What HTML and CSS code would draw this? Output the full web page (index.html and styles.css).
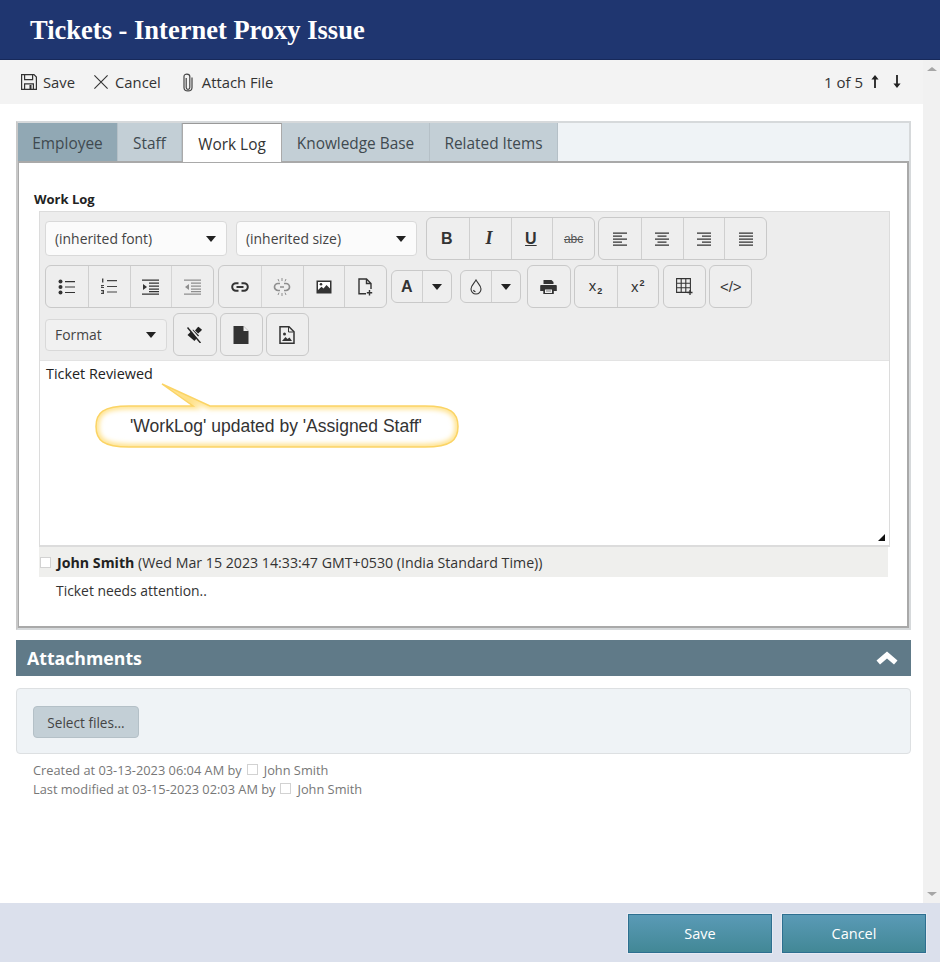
FILE: index.html
```html
<!DOCTYPE html>
<html>
<head lang="en">
    <meta charset="UTF-8">
    <title>Tickets - Internet Proxy Issue</title>
    <link rel="stylesheet" href="styles.css">
</head>
<body>
<div class="header"><h1>Tickets - Internet Proxy Issue</h1></div>
<div class="middle">
    <div class="content">
        <div class="actions">
            <a class="action act-save">
                <svg width="16" height="16" viewBox="0 0 16 16" fill="none" stroke="#333" stroke-width="1.2"><path d="M.6.6h12.400l2.400 2.400v12.400H.6z"/><path d="M3.600.6v5h8v-5M3.600 15.400V9.800h8.800v5.600"/><path d="M8.500 11h2v4.400h-2z" fill="#333" stroke="none"/></svg>
                <span>Save</span>
            </a>
            <a class="action act-cancel">
                <svg width="14" height="14" viewBox="0 0 14 14" fill="none" stroke="#333" stroke-width="1.1"><path d="M.4.4l13.200 13.200M13.600.4L.4 13.600"/></svg>
                <span>Cancel</span>
            </a>
            <a class="action act-attach">
                <svg width="10" height="19" viewBox="0 0 10 19" fill="none" stroke="#444" stroke-width="1.2"><path d="M3.200 5v9.500c0 2.500 3.600 2.500 3.600 0V3.500C6.800.2 1 .2 1 3.500v11c0 4.600 8 4.600 8 0V4.500"/></svg>
                <span>Attach File</span>
            </a>
            <div class="pager">
                <span>1 of 5</span>
                <svg class="pager-up" width="8" height="13" viewBox="0 0 8 13"><path d="M4 0L7.600 4.600H4.900V13H3.100V4.600H.4z" fill="#222"/></svg>
                <svg class="pager-down" width="8" height="13" viewBox="0 0 8 13"><path d="M4 13L.4 8.400h2.700V0h1.800v8.400h2.700z" fill="#222"/></svg>
            </div>
        </div>

        <div class="body">
            <div class="tabs">
                <ul class="tabstrip">
                    <li class="tab tab-employee">Employee</li>
                    <li class="tab tab-staff">Staff</li>
                    <li class="tab tab-active">Work Log</li>
                    <li class="tab tab-kb">Knowledge Base</li>
                    <li class="tab tab-related">Related Items</li>
                </ul>
                <div class="panel">
                    <label class="field-label">Work Log</label>
                    <div class="editor">
                        <div class="ed-toolbar">
                            <div class="ed-row">
                                <div class="combo combo-font"><span>(inherited font)</span><i class="caret"></i></div>
                                <div class="combo combo-size"><span>(inherited size)</span><i class="caret"></i></div>
                                <div class="group gl-9">
                                    <div class="btn"><b class="g-b">B</b></div>
                                    <div class="btn"><i class="g-i">I</i></div>
                                    <div class="btn"><u class="g-u">U</u></div>
                                    <div class="btn"><s class="g-s">abc</s></div>
                                </div>
                                <div class="group">
                                    <div class="btn"><svg width="16" height="16" viewBox="0 0 16 16" fill="#333"><path d="M1 1.500h14v1.300H1zM1 4.500h9v1.300H1zM1 7.500h14v1.300H1zM1 10.500h9v1.300H1zM1 13.500h14v1.300H1z"/></svg></div>
                                    <div class="btn"><svg width="16" height="16" viewBox="0 0 16 16" fill="#333"><path d="M1 1.500h14v1.300H1zM3.500 4.500h9v1.300h-9zM1 7.500h14v1.300H1zM3.500 10.500h9v1.300h-9zM1 13.500h14v1.300H1z"/></svg></div>
                                    <div class="btn"><svg width="16" height="16" viewBox="0 0 16 16" fill="#333"><path d="M1 1.500h14v1.300H1zM6 4.500h9v1.300H6zM1 7.500h14v1.300H1zM6 10.500h9v1.300H6zM1 13.500h14v1.300H1z"/></svg></div>
                                    <div class="btn"><svg width="16" height="16" viewBox="0 0 16 16" fill="#333"><path d="M1 1.500h14v1.300H1zM1 4.500h14v1.300H1zM1 7.500h14v1.300H1zM1 10.500h14v1.300H1zM1 13.500h14v1.300H1z"/></svg></div>
                                </div>
                            </div>
                            <div class="ed-row">
                                <div class="group">
                                    <div class="btn"><svg width="18" height="16" viewBox="0 0 18 16" fill="#333"><circle cx="2.500" cy="2.500" r="2"/><circle cx="2.500" cy="8" r="2"/><circle cx="2.500" cy="13.500" r="2"/><path d="M7 2h10v1.200H7zM7 7.400h10v1.200H7zM7 12.900h10v1.200H7z"/></svg></div>
                                    <div class="btn"><svg width="18" height="17" viewBox="0 0 18 17" fill="#444"><path d="M2 .5h1.400v4H2zM1 7h3v1H2.600v1H4v1H1V8.500h1.600v-.6H1zM1 12h3v4H1v-1h2v-.6H1.600v-.8H3V13H1z"/><path d="M7 2h10v1.200H7zM7 7.900h10v1.200H7zM7 13.400h10v1.200H7z"/></svg></div>
                                    <div class="btn"><svg width="17" height="16" viewBox="0 0 17 16" fill="#333"><path d="M0 .5h17v1.300H0zM7 3.500h10v1.200H7zM7 6.500h10v1.200H7zM7 9.500h10v1.200H7zM7 12h10v1.200H7zM0 14.500h17v1.200H0zM1 5l4 3-4 3z"/></svg></div>
                                    <div class="btn btn-off"><svg width="17" height="16" viewBox="0 0 17 16" fill="#777"><path d="M0 .5h17v1.300H0zM7 3.500h10v1.200H7zM7 6.500h10v1.200H7zM7 9.500h10v1.200H7zM7 12h10v1.200H7zM0 14.500h17v1.200H0zM5 5L1 8l4 3z"/></svg></div>
                                </div>
                                <div class="group gl-1">
                                    <div class="btn"><svg width="18" height="10" viewBox="0 0 18 10" fill="none" stroke="#333" stroke-width="2"><path d="M7.500 1.200H5a3.800 3.800 0 0 0 0 7.600h2.500M10.500 1.200H13a3.800 3.800 0 0 1 0 7.600h-2.500M5.500 5h7"/></svg></div>
                                    <div class="btn btn-off"><svg width="18" height="18" viewBox="0 0 18 18" fill="none" stroke="#777" stroke-width="1.700"><path d="M7 5.500H5a3.500 3.500 0 0 0 0 7h2M11 5.500h2a3.500 3.500 0 0 1 0 7h-2M7 9h4"/><path d="M9 0v3M5 1l1 2.400M13 1l-1 2.400M9 15v3M5 17l1-2.400M13 17l-1-2.400" stroke-width="1"/></svg></div>
                                    <div class="btn"><svg width="16" height="14" viewBox="0 0 16 14"><path d="M.5.5h15v13H.5z" fill="#333"/><path d="M2 2h12v6.500L10.500 5 7.500 8.500 5.500 6.800 2 10z" fill="#fff"/><circle cx="5" cy="4.200" r="1.300" fill="#333"/></svg></div>
                                    <div class="btn"><svg width="15" height="18" viewBox="0 0 15 18" fill="none" stroke="#333" stroke-width="1.400"><path d="M8 15.800H1V1h7.500L13 5.500v5.500M8.500 1v4.500H13"/><path d="M11.500 12v5.500M8.800 14.800h5.400"/></svg></div>
                                </div>
                                <div class="group group-small gl-1">
                                    <div class="btn btn-a"><span class="g-a">A</span></div>
                                    <div class="btn btn-drop"><i class="caret"></i></div>
                                </div>
                                <div class="group group-small gl-5">
                                    <div class="btn btn-a"><svg width="12" height="16" viewBox="0 0 12 16" fill="none" stroke="#333" stroke-width="1.100"><path d="M6 1c1.500 3 5 5.500 5 9a5 5 0 0 1-10 0c0-3.500 3.500-6 5-9z"/><path d="M3.500 11c.3 1 1 1.600 2 1.800"/></svg></div>
                                    <div class="btn btn-drop"><i class="caret"></i></div>
                                </div>
                                <div class="group gl-3">
                                    <div class="btn"><svg width="17" height="16" viewBox="0 0 17 16"><path d="M3.500 5V1h8l2 2v2zM1 6h15a1 1 0 0 1 .8 1v5h-3v3H3.300v-3H.2V7A1 1 0 0 1 1 6z" fill="#333"/><path d="M5 10.500h7V14H5z" fill="#eee"/><path d="M6 11.700h5v.6H6z" fill="#333"/></svg></div>
                                </div>
                                <div class="group">
                                    <div class="btn"><span class="g-x">x<small>2</small></span></div>
                                    <div class="btn"><span class="g-x g-sup">x<small>2</small></span></div>
                                </div>
                                <div class="group gl-1">
                                    <div class="btn btn-narrow"><svg width="17" height="17" viewBox="0 0 17 17" fill="none" stroke="#333" stroke-width="1.100"><path d="M.6.6h13.800v13.800H.6zM5.200.6v13.800M9.800.6v13.800M.6 5.200h13.800M.6 9.800h13.800"/><path d="M14 12v5M11.500 14.500h5" stroke-width="1.300"/></svg></div>
                                </div>
                                <div class="group">
                                    <div class="btn btn-narrow"><span class="g-code">&lt;/&gt;</span></div>
                                </div>
                            </div>
                            <div class="ed-row">
                                <div class="combo combo-format"><span>Format</span><i class="caret"></i></div>
                                <div class="group gl-3">
                                    <div class="btn"><svg width="17" height="17" viewBox="0 0 17 17"><path d="M1.500 9L7 3.500l6 6L8.500 15z" fill="#222"/><path d="M9 4.500l2.500-3 1-.8 3.500 3-.8 1-3 2.800z" fill="#222"/><path d="M2.500 1l13 15" stroke="#eee" stroke-width="2"/><path d="M1.500 1.500l13 15.500" stroke="#222" stroke-width="1.400"/></svg></div>
                                </div>
                                <div class="group">
                                    <div class="btn btn-narrow"><svg width="16" height="18" viewBox="0 0 16 18"><path d="M.5 0h10l5 5v13H.5z" fill="#333"/><path d="M10.500 0v5h5z" fill="#eee"/></svg></div>
                                </div>
                                <div class="group">
                                    <div class="btn btn-narrow"><svg width="16" height="18" viewBox="0 0 16 18" fill="none"><path d="M1 .8h9l5 5v11.400H1z" stroke="#333" stroke-width="1.500"/><path d="M9.500 1v5h5" stroke="#333"/><path d="M3 15l3.500-4 2 2 2-1.500 2.500 3.500z" fill="#333"/><circle cx="5.500" cy="8" r="1.500" fill="#333"/></svg></div>
                                </div>
                            </div>
                        </div>
                        <div class="ed-body">
                            <p>Ticket Reviewed</p>
                            <svg class="callout" width="366" height="66" viewBox="0 0 366 66">
                                <defs>
                                    <clipPath id="shape"><path d="M67 1L115 23H330C356 23 363 30 363 43.500S356 64 330 64H34C8 64 1 57 1 43.500S8 23 34 23H98z"/></clipPath>
                                    <filter id="soft" x="-5%" y="-20%" width="110%" height="140%"><feGaussianBlur stdDeviation="2.500"/></filter>
                                </defs>
                                <path d="M67 1L115 23H330C356 23 363 30 363 43.500S356 64 330 64H34C8 64 1 57 1 43.500S8 23 34 23H98z" fill="#fff"/>
                                <g clip-path="url(#shape)">
                                    <path d="M67 1L115 23H330C356 23 363 30 363 43.500S356 64 330 64H34C8 64 1 57 1 43.500S8 23 34 23H98z" fill="none" stroke="#ffe084" stroke-width="6" filter="url(#soft)"/>
                                </g>
                                <path d="M67 1L115 23H330C356 23 363 30 363 43.500S356 64 330 64H34C8 64 1 57 1 43.500S8 23 34 23H98z" fill="none" stroke="#fbd465" stroke-width="1.500"/>
                                <text x="181" y="49">'WorkLog' updated by 'Assigned Staff'</text>
                            </svg>
                            <i class="resize"></i>
                        </div>
                    </div>
                    <div class="log-head">
                        <i class="avatar"></i>
                        <span><b>John Smith</b> (Wed Mar 15 2023 14:33:47 GMT+0530 (India Standard Time))</span>
                    </div>
                    <div class="log-text">Ticket needs attention..</div>
                </div>
            </div>

            <div class="section-bar">
                <span>Attachments</span>
                <svg width="22" height="14" viewBox="0 0 22 14"><path d="M11 .5L21.500 9.500 18 13.500 11 7.500 4 13.500.5 9.500z" fill="#fff"/></svg>
            </div>
            <div class="upload"><a class="select-btn">Select files...</a></div>
            <div class="meta">
                <div>Created at 03-13-2023 06:04 AM by<i class="avatar"></i><span>John Smith</span></div>
                <div>Last modified at 03-15-2023 02:03 AM by<i class="avatar"></i><span>John Smith</span></div>
            </div>
        </div>
    </div>
    <div class="scrollbar">
        <i class="arrow-up"></i>
        <i class="arrow-down"></i>
    </div>
</div>
<div class="footer">
    <a class="foot-btn">Save</a>
    <a class="foot-btn">Cancel</a>
</div>
</body>
</html>
```

FILE: styles.css
```css
*{
    margin: 0;
    padding: 0;
    list-style: none;
    box-sizing: border-box;
}
html,body{
    width: 100%;
    height: 100%;
    overflow: hidden;
}
body{
    display: flex;
    flex-direction: column;
    font-family: "Open Sans", "Noto Sans", sans-serif;
    font-size: 14px;
    color: #333;
    background: #fff;
}
.header{
    height: 60px;
    background: #1f3670;
    border-bottom: 1px solid #17295a;
    padding: 12px 0 0 30px;
}
.header h1{
    font-family: "Liberation Serif", serif;
    font-size: 26.5px;
    line-height: 36px;
    font-weight: bold;
    color: #fff;
}
.middle{
    flex: 1;
    display: flex;
    min-height: 0;
}
.content{
    flex: 1;
    min-width: 0;
}
.scrollbar{
    width: 17px;
    background: #f1f1f1;
    display: flex;
    flex-direction: column;
    justify-content: space-between;
    align-items: center;
    padding: 7px 0 7px;
}
.arrow-up{
    border: 4px solid transparent;
    border-top: 0;
    border-bottom: 4px solid #a6a6a6;
    border-left-width: 5px;
    border-right-width: 5px;
}
.arrow-down{
    border: 4px solid transparent;
    border-bottom: 0;
    border-top: 4px solid #a6a6a6;
    border-left-width: 5px;
    border-right-width: 5px;
}

/* action bar */
.actions{
    height: 44px;
    background: #f3f3f3;
    display: flex;
    align-items: center;
    padding-left: 21px;
    font-size: 14.8px;
    color: #333;
}
.action{
    display: flex;
    align-items: center;
}
.act-save svg{
    margin-right: 6px;
}
.act-cancel{
    margin-left: 19px;
}
.act-cancel svg{
    margin-right: 7px;
}
.act-attach{
    margin-left: 22px;
}
.act-attach svg{
    margin-right: 9px;
}
.pager{
    margin-left: auto;
    display: flex;
    align-items: center;
    padding-right: 22px;
    font-size: 15px;
}
.pager-up{
    margin-left: 8px;
    margin-top: -2px;
}
.pager-down{
    margin-left: 14px;
    margin-top: -2px;
}

/* tabs */
.body{
    padding: 17px 12px 0 16px;
}
.tabs{
    border: 2px solid #d6d9db;
    border-left-color: #c8c8c8;
    background: #fff;
}
.tabstrip{
    display: flex;
    height: 38px;
    background: #eff3f6;
    font-size: 15.4px;
}
.tab{
    display: flex;
    align-items: center;
    justify-content: center;
    height: 38px;
    padding-top: 2px;
    background: #c3cfd6;
    border-right: 1px solid #b5c0c7;
    color: #3f4a50;
}
.tab-employee{
    width: 100px;
    background: #91a8b4;
}
.tab-staff{
    width: 64px;
}
.tab-active{
    width: 100px;
    height: 39px;
    background: #fff;
    color: #333;
    border-top: 1px solid #999;
    border-right: 1px solid #aaa;
    border-left: 1px solid #aaa;
    position: relative;
    z-index: 1;
}
.tab-kb{
    width: 148px;
}
.tab-related{
    width: 128px;
}
.panel{
    border: 2px solid #a9a9a9;
    border-left-width: 1px;
    height: 467px;
    padding: 27px 21px 0 15px;
}
.field-label{
    display: block;
    font-size: 13px;
    font-weight: bold;
    line-height: 18px;
    color: #222;
    margin-bottom: 3px;
}

/* editor */
.editor{
    margin-left: 5px;
    border: 1px solid #dcdcdc;
    border-bottom-width: 2px;
    width: 851px;
}
.ed-toolbar{
    background: #ededed;
    height: 149px;
    padding: 5px 0 0 5px;
    border-bottom: 1px solid #e3e3e3;
}
.ed-row{
    display: flex;
    align-items: center;
    height: 43px;
    margin-bottom: 5px;
}
.combo{
    height: 35px;
    background: #fbfbfb;
    border: 1px solid #d9d9d9;
    border-radius: 4px;
    display: flex;
    align-items: center;
    justify-content: space-between;
    padding: 0 10px 0 9px;
    font-size: 13.9px;
    color: #444;
}
.combo-font{
    width: 182px;
}
.combo-size{
    width: 181px;
    margin-left: 9px;
}
.combo-format{
    width: 122px;
    height: 32px;
    background: #f1f1f1;
}
.caret{
    display: block;
    border-left: 5px solid transparent;
    border-right: 5px solid transparent;
    border-top: 6px solid #222;
}
.group{
    display: flex;
    height: 43px;
    background: #eee;
    border: 1px solid #c9c9c9;
    border-radius: 6px;
    margin-left: 3px;
}
.ed-row .group:first-child{
    margin-left: 0;
}
.group-small{
    height: 33px;
}
.ed-row .gl-1{
    margin-left: 4px;
}
.ed-row .gl-3{
    margin-left: 6px;
}
.ed-row .gl-5{
    margin-left: 8px;
}
.ed-row .gl-9{
    margin-left: 9px;
}
.btn{
    width: 41.75px;
    display: flex;
    align-items: center;
    justify-content: center;
    border-left: 1px solid #cfcfcf;
    color: #333;
}
.btn:first-child{
    border-left: 0;
}
.btn-off{
    opacity: 0.8;
}
.btn-narrow{
    width: 41px;
}
.btn-a{
    width: 29.75px;
}
.btn-drop{
    width: 29.25px;
}
.g-b,.g-i,.g-u,.g-s,.g-a{
    font-family: "Liberation Sans", sans-serif;
    font-size: 16px;
}
.g-b,.g-a{
    font-weight: bold;
}
.g-i{
    font-family: "Liberation Serif", serif;
    font-size: 18px;
    font-weight: bold;
    margin-right: 2px;
}
.g-b{
    margin-right: 2px;
}
.g-u{
    font-weight: bold;
    margin-right: 2px;
}
.g-s{
    font-size: 12px;
    color: #555;
}
.g-x{
    font-size: 15px;
    font-family: "Liberation Sans", sans-serif;
}
.g-x small{
    font-size: 9px;
    font-weight: bold;
    vertical-align: -3px;
    margin-left: 1px;
}
.g-sup small{
    vertical-align: 6px;
}
.g-code{
    font-size: 15px;
    font-family: "Liberation Sans", sans-serif;
}
.ed-body{
    position: relative;
    height: 184px;
    background: #fff;
    padding: 3px 0 0 6px;
    font-size: 14.4px;
    color: #222;
    line-height: 20px;
}
.callout{
    position: absolute;
    left: 55px;
    top: 22px;
}
.callout text{
    font-family: "Liberation Sans", sans-serif;
    font-size: 17.5px;
    fill: #333;
    text-anchor: middle;
}
.resize{
    position: absolute;
    right: 4px;
    bottom: 4px;
    border-left: 7px solid transparent;
    border-bottom: 7px solid #111;
}

/* log entry */
.log-head{
    margin-left: 5px;
    width: 849px;
    height: 30px;
    background: #efefed;
    display: flex;
    align-items: center;
    padding: 1px 0 0 1px;
    font-size: 14.2px;
    color: #333;
}
.log-head b{
    color: #222;
}
.avatar{
    display: inline-block;
    width: 11px;
    height: 11px;
    border: 1px solid #d2d2d2;
    background: #fff;
}
.log-head .avatar{
    margin-right: 6px;
}
.log-text{
    margin: 4px 0 0 22px;
    font-size: 13.9px;
    line-height: 20px;
    color: #333;
}

/* attachments */
.section-bar{
    margin-top: 10px;
    height: 36px;
    background: #607a88;
    display: flex;
    align-items: center;
    justify-content: space-between;
    padding: 0 13px 0 11px;
    color: #fff;
    font-size: 17.7px;
    font-weight: bold;
}
.upload{
    margin-top: 12px;
    height: 66px;
    background: #eff3f6;
    border: 1px solid #dde0e2;
    border-radius: 4px;
    padding: 17px 0 0 16px;
}
.select-btn{
    display: flex;
    align-items: center;
    justify-content: center;
    width: 106px;
    height: 32px;
    background: #c3cfd6;
    border: 1px solid #b4c0c7;
    border-radius: 4px;
    font-size: 13.6px;
    color: #444;
}
.meta{
    margin: 7px 0 0 17px;
    font-size: 12.8px;
    line-height: 19px;
    color: #777;
}
.meta div{
    display: flex;
    align-items: center;
}
.meta .avatar{
    margin: 0 6px 3px 5px;
}

/* footer */
.footer{
    height: 59px;
    background: #dbe0ec;
    display: flex;
    justify-content: flex-end;
    gap: 10px;
    padding: 11px 14px 0 0;
}
.foot-btn{
    width: 144px;
    height: 39px;
    display: flex;
    align-items: center;
    justify-content: center;
    background: linear-gradient(#5a9ab6, #428896);
    border: 1px solid #2d6f90;
    outline: 1px solid #e6eaf2;
    color: #fff;
    font-size: 14.5px;
}
```
